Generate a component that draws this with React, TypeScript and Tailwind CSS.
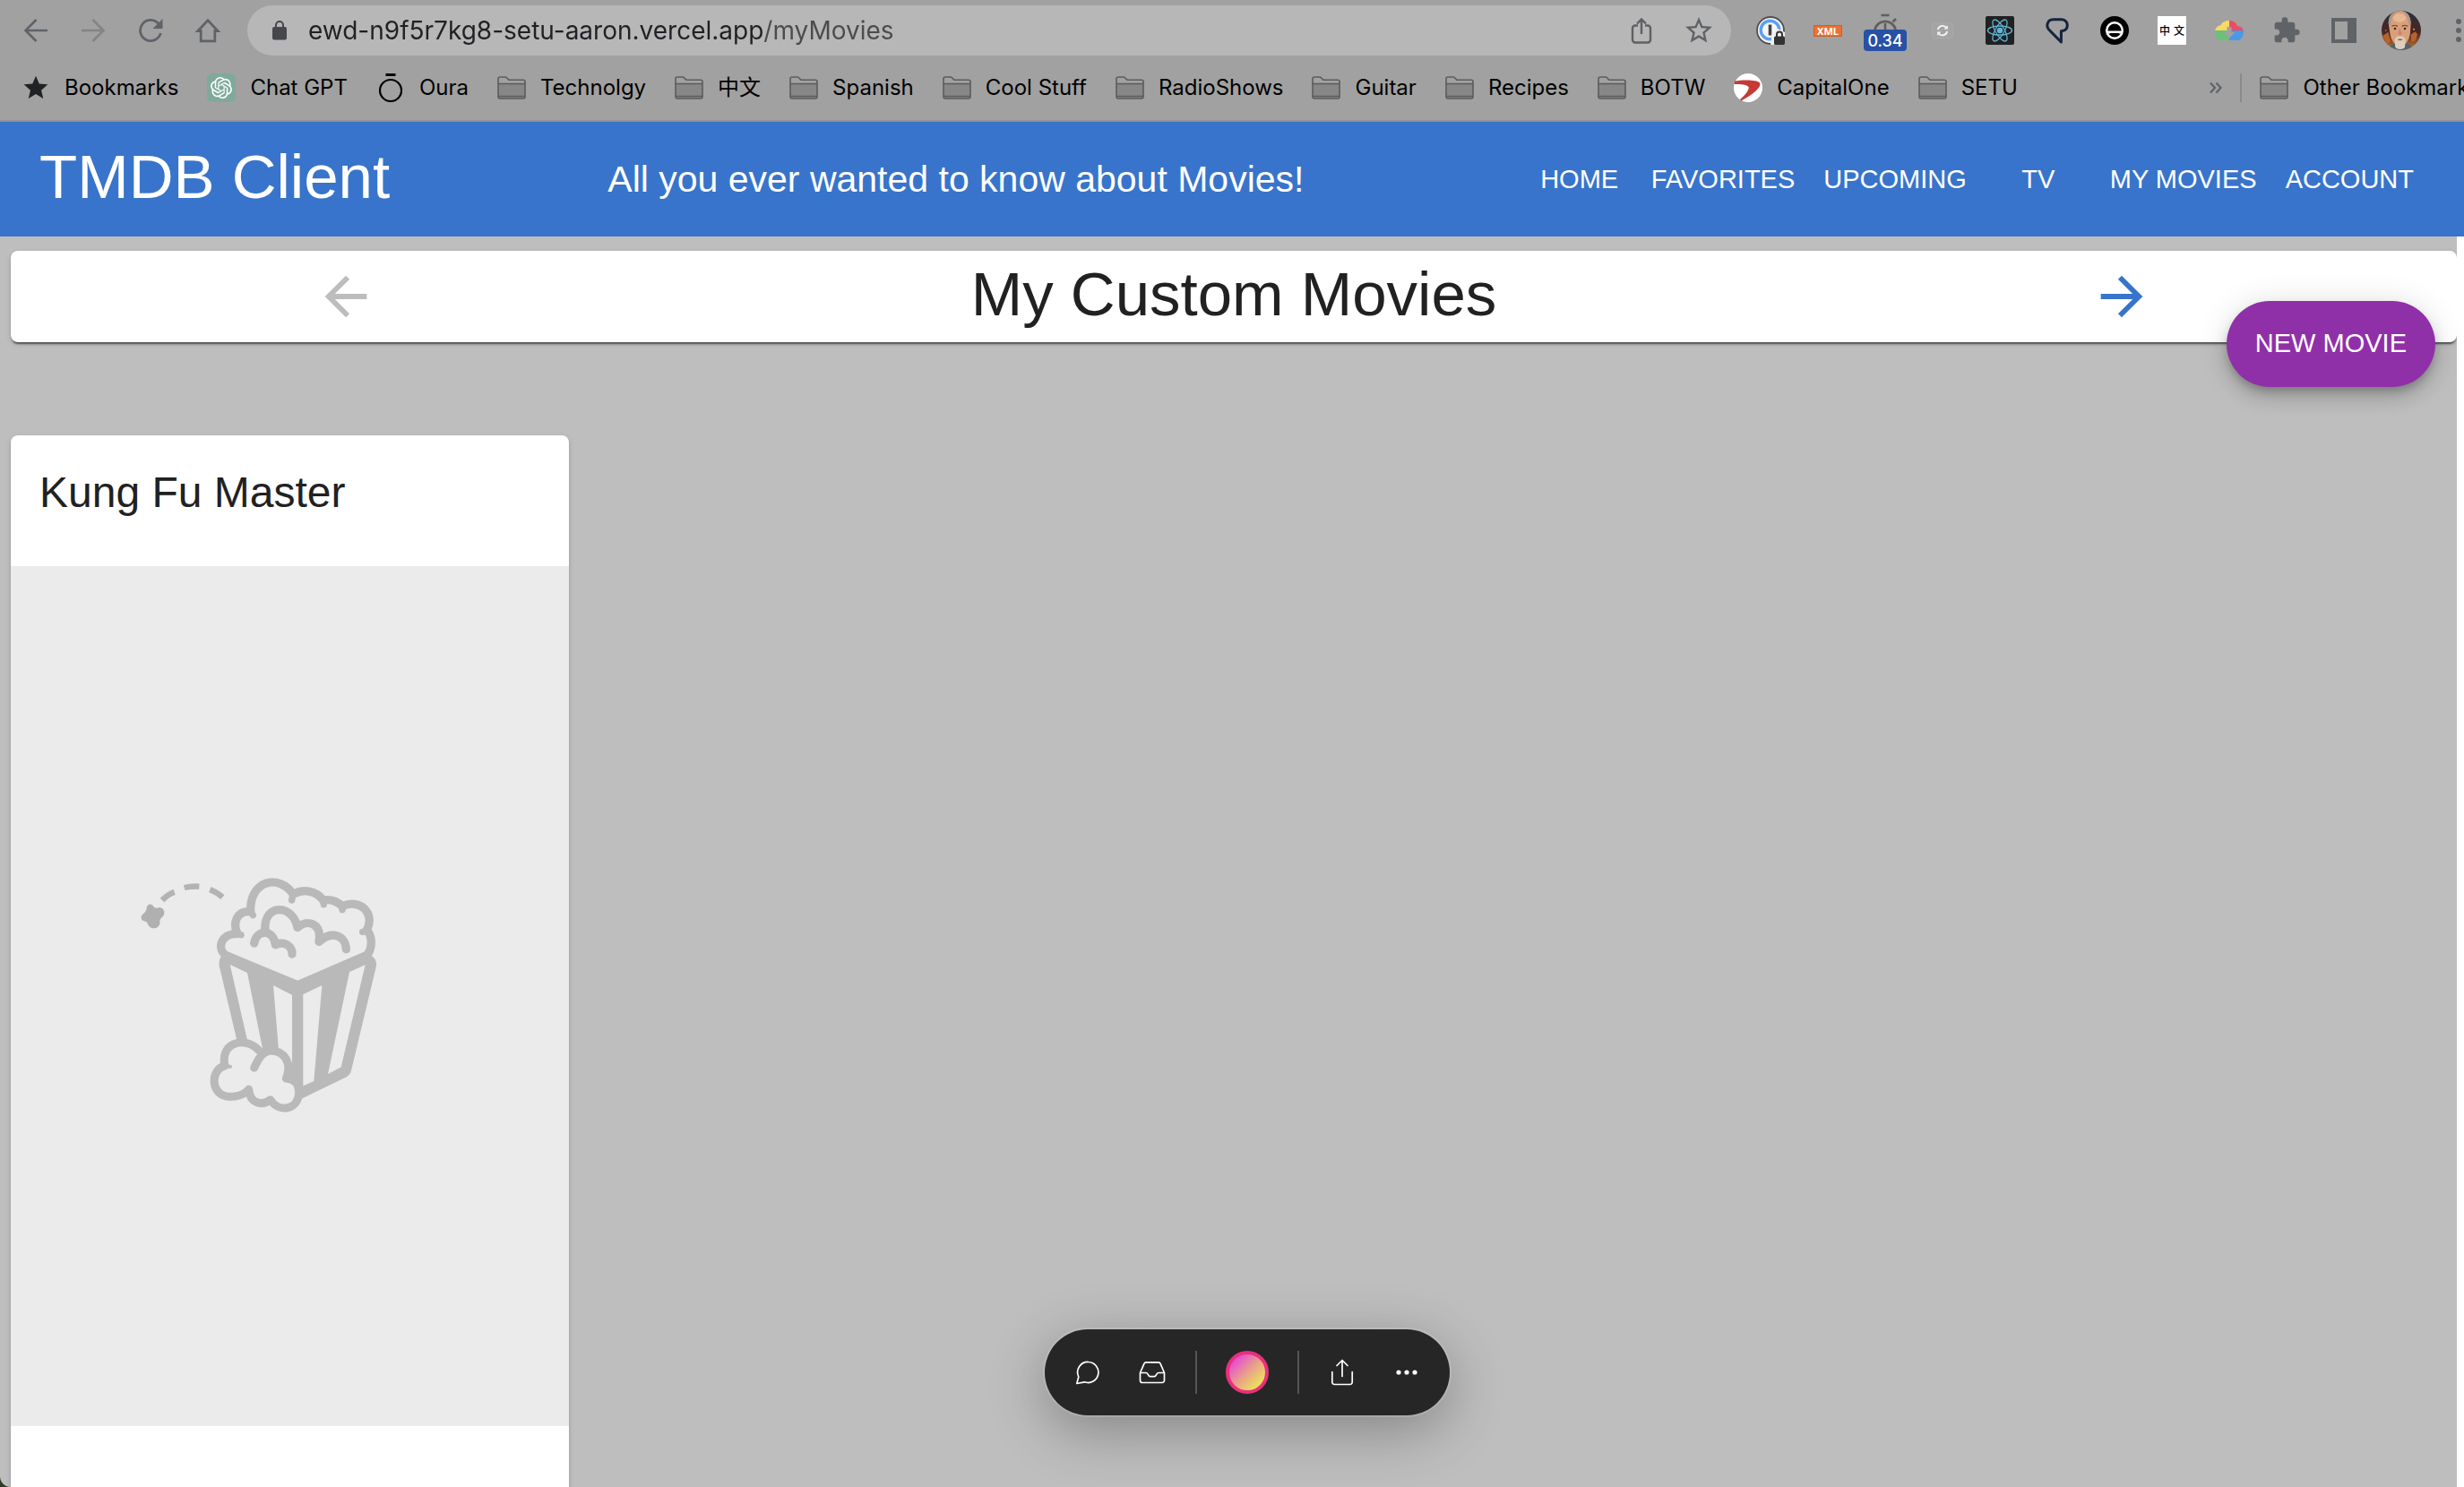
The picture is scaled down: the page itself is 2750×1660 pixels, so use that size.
import React from "react";
import { SiOpenai } from "react-icons/si";
import { MdExtension, MdStarBorder, MdStar } from "react-icons/md";

type IconProps = { className?: string };

/* ---------- browser icons ---------- */

const BackIcon = ({ className }: IconProps) => (
  <svg viewBox="0 0 28 28" className={className} fill="none" stroke="currentColor" strokeWidth="2.6">
    <path d="M27 14H3M14.5 2 2.5 14l12 12" />
  </svg>
);

const ForwardIcon = ({ className }: IconProps) => (
  <svg viewBox="0 0 28 28" className={className} fill="none" stroke="currentColor" strokeWidth="2.6">
    <path d="M1 14h24M13.500 2l12 12-12 12" />
  </svg>
);

const ReloadIcon = ({ className }: IconProps) => (
  <svg viewBox="0 0 28 28" className={className} fill="none">
    <path d="M23.500 7.200A11.600 11.600 0 1 0 25.300 17" stroke="currentColor" strokeWidth="2.800" />
    <path d="M27.500 1v11h-11z" fill="currentColor" />
  </svg>
);

const HomeIcon = ({ className }: IconProps) => (
  <svg viewBox="0 0 28 28" className={className} fill="none" stroke="currentColor" strokeWidth="2.8">
    <path d="M14 2.800 2.800 14.500h3.400v11.300h15.600V14.500h3.400z" />
  </svg>
);

const LockIcon = ({ className }: IconProps) => (
  <svg viewBox="0 0 16 22" className={className}>
    <rect x="0" y="7" width="16" height="14.500" rx="2" fill="#46474c" />
    <path d="M4 8V5a4 4 0 0 1 8 0v3" fill="none" stroke="#46474c" strokeWidth="2" />
  </svg>
);

const ShareIcon = ({ className }: IconProps) => (
  <svg viewBox="0 0 24 30" className={className} fill="none" stroke="#5f6064" strokeWidth="2.400">
    <path d="M8 9.500H5A3 3 0 0 0 2 12.500v13A3 3 0 0 0 5 28.500h14a3 3 0 0 0 3-3v-13a3 3 0 0 0-3-3h-3M12 19V2.500M7 7.500l5-5 5 5" />
  </svg>
);

const FolderIcon = () => (
  <svg viewBox="0 0 32 26" className="h-[26px] w-8" fill="none" stroke="#5c5c5c" strokeWidth="1.600">
    <path d="M1 8.500h30V23a2 2 0 0 1-2 2H3a2 2 0 0 1-2-2z" fill="#878787" />
    <path d="M1 8.500V3a2 2 0 0 1 2-2h6.500L13 4.200h16a2 2 0 0 1 2 2v2.300M1 22.500h30" />
  </svg>
);

const OuraIcon = () => (
  <svg viewBox="0 0 32 32" className="size-8" fill="none" stroke="#000">
    <circle cx="16" cy="19" r="12" strokeWidth="2.200" />
    <path d="M10.500 1.500h11" strokeWidth="3" />
  </svg>
);

const GptIcon = () => (
  <span className="flex size-8 items-center justify-center rounded-[6px] bg-[#7fa99b]">
    <SiOpenai className="size-6 text-white" />
  </span>
);

const CapitalIcon = () => (
  <svg viewBox="0 0 32 32" className="size-8">
    <circle cx="16" cy="16" r="16" fill="#fff" />
    <path d="M1 8.500C9 7 26 6.500 29 10.500c3 4.500-9 14-20.500 20L7 29c6-5 11-12 9.500-14C15 12.500 8 11.500.800 12z" fill="#c63b35" />
  </svg>
);

/* ---------- extension icons ---------- */

const PasswordIcon = () => (
  <svg viewBox="0 0 32 32" className="size-8">
    <circle cx="16" cy="16" r="15" fill="#f4f4f4" stroke="#4f4f4f" strokeWidth="1.800" />
    <circle cx="15.500" cy="15.500" r="10.300" fill="#f7f7f7" stroke="#5b9ff5" strokeWidth="3.400" />
    <rect x="13.700" y="9.500" width="3.600" height="12" fill="#444" />
    <path d="M18 18l6-4 8 4v14H16z" fill="#f0f0f0" />
    <rect x="20" y="22.500" width="12" height="9.500" rx="1.500" fill="#333" />
    <path d="M23 23v-2.500a3 3 0 0 1 6 0V23" fill="none" stroke="#333" strokeWidth="2" />
  </svg>
);

const StopwatchIcon = () => (
  <svg viewBox="0 0 28 20" className="h-5 w-7" fill="none" stroke="#5f5f5f">
    <path d="M2.500 18a11.800 11.800 0 0 1 23 0" strokeWidth="2.800" />
    <path d="M9.500 2h9M14 11v7" strokeWidth="2.600" />
    <path d="M22.500 9.500 26 6" strokeWidth="2.600" />
  </svg>
);

const SyncIcon = () => (
  <svg viewBox="0 0 24 18" className="h-[18px] w-6" fill="none">
    <rect x=".5" y=".5" width="23" height="17" rx="3" fill="#a4a4a4" stroke="#a9a9a9" />
    <path d="M6.800 8.200a5.300 5.300 0 0 1 9.500-2.200M17.200 10a5.300 5.300 0 0 1-9.500 2.200" stroke="#f5f5f5" strokeWidth="1.800" />
    <path d="M17.800 3.200v4.200h-4.200zM6.200 14.800v-4.200h4.200z" fill="#f5f5f5" />
  </svg>
);

const ReactIcon = () => (
  <svg viewBox="0 0 32 32" className="size-8" fill="none" stroke="#62b5d6" strokeWidth="1.300">
    <rect width="32" height="32" rx="2" fill="#212121" stroke="none" />
    <circle cx="16" cy="16" r="2.600" fill="#62b5d6" />
    <ellipse cx="16" cy="16" rx="13.500" ry="5" />
    <ellipse cx="16" cy="16" rx="13.500" ry="5" transform="rotate(60 16 16)" />
    <ellipse cx="16" cy="16" rx="13.500" ry="5" transform="rotate(120 16 16)" />
  </svg>
);

const PinIcon = () => (
  <svg viewBox="0 0 26 29" className="h-[29px] w-[26px]" fill="none" stroke="#16243c" strokeWidth="3" strokeLinejoin="round">
    <path d="M8.500 1.700h9A6.500 6.500 0 0 1 24.300 8c0 3-1.800 5.600-4.600 6.300l-2.300.5V27L3.500 12.800C.500 9.500 1.700 1.700 8.500 1.700z" />
  </svg>
);

const HelmetIcon = () => (
  <svg viewBox="0 0 32 32" className="size-8" fill="none">
    <circle cx="16" cy="16" r="16" fill="#000" />
    <circle cx="16" cy="16" r="8.800" stroke="#fff" strokeWidth="2.400" />
    <path d="M8 16.500h16v3H8z" fill="#fff" />
    <path d="M11 19.500h10" stroke="#000" strokeWidth="1.200" />
  </svg>
);

const CloudIcon = () => (
  <svg viewBox="0 0 32 22" className="h-[22px] w-8">
    <path d="M16 0v11H0C1 7.500 3.500 5.500 6.500 5 8 2 11.500 0 16 0z" fill="#f8d966" />
    <path d="M16 0c4.500 0 8 2.500 9 6 3.500.300 6 2.300 7 5H16z" fill="#ee4b63" />
    <path d="M0 11h16v11H7C2.500 22-.500 16 0 11z" fill="#6cc07a" />
    <path d="M16 11h16c.500 5.500-2.500 11-7 11h-9z" fill="#4c98e8" />
    <path d="M13.500 7h5v6h4L16 19.500 9.500 13h4z" fill="#a1a1a1" />
  </svg>
);

const PanelIcon = () => (
  <svg viewBox="0 0 28 28" className="size-7">
    <path fillRule="evenodd" d="M0 0h28v28H0zM4 4v20h14V4z" fill="#5f6368" />
  </svg>
);

const Avatar = () => (
  <svg viewBox="0 0 132 132" className="size-11">
    <defs>
      <clipPath id="face-clip">
        <circle cx="66" cy="66" r="66" />
      </clipPath>
      <linearGradient id="face-bg" x1="0" y1="0" x2="0" y2="1">
        <stop offset="0" stopColor="#27303f" />
        <stop offset=".55" stopColor="#4a2522" />
        <stop offset="1" stopColor="#c07b35" />
      </linearGradient>
    </defs>
    <g clipPath="url(#face-clip)">
      <rect width="132" height="132" fill="url(#face-bg)" />
      <path d="M4 85l18-14 8 30-10 14zM98 80l14-10 8 8-6 22-14 6z" fill="#b8622c" />
      <circle cx="108" cy="62" r="3" fill="#e8a24a" />
      <circle cx="14" cy="66" r="2.500" fill="#d78a3c" />
      <path d="M22 132c4-18 18-24 42-24s36 6 42 24z" fill="#56606b" />
      <path d="M23 40C25 14 42 0 62 0s34 14 36 40l-2 34c-4 26-16 42-34 48-18-6-30-22-34-48z" fill="#d99f7b" />
      <path d="M24 46C20 16 40-2 62 0c-18 4-30 20-32 48zM97 46C99 20 88 2 64 0c16 6 26 22 27 48z" fill="#a8998c" />
      <ellipse cx="60" cy="24" rx="22" ry="14" fill="#e8b896" />
      <path d="M34 52q9-6 20 0M68 52q10-6 20 0" stroke="#7b5038" strokeWidth="4" fill="none" />
      <circle cx="45" cy="60" r="4" fill="#3d2d28" />
      <circle cx="78" cy="60" r="4" fill="#3d2d28" />
      <path d="M60 58l-5 22h14z" fill="#c98463" />
      <path d="M44 98c4-12 10-14 18-12 8-2 14 0 18 12l-2 24c-6 9-26 9-32 0z" fill="#dccfbc" />
      <path d="M52 97q10-6 20 0-10 6-20 0z" fill="#a3604e" />
    </g>
  </svg>
);

const MoreIcon = () => (
  <svg viewBox="0 0 12 28" className="h-7 w-3" fill="#5f6368">
    <circle cx="6" cy="4" r="3" />
    <circle cx="6" cy="14" r="3" />
    <circle cx="6" cy="24" r="3" />
  </svg>
);

/* ---------- page icons ---------- */

const ArrowBack = () => (
  <svg viewBox="0 0 24 24" className="size-[70px]" fill="currentColor">
    <path d="M20 11H7.830l5.590-5.590L12 4l-8 8 8 8 1.410-1.410L7.830 13H20v-2z" />
  </svg>
);

const ArrowForward = () => (
  <svg viewBox="0 0 24 24" className="size-[70px]" fill="currentColor">
    <path d="m12 4-1.410 1.410L16.170 11H4v2h12.170l-5.580 5.590L12 20l8-8z" />
  </svg>
);

const PopcornArt = () => (
  <svg viewBox="-354 -951 1869 2880" className="block h-auto w-full bg-[#ebebeb]" fill="none" role="img" aria-label="No poster available">
    <g stroke="#b9b9b9" strokeWidth="28" strokeLinecap="round" strokeLinejoin="round">
      <path fill="#ebebeb" d="M370 354C335 335 345 280 405 280C388 245 402 202 449 206C445 100 545 78 592 148C625 128 668 135 692 168C715 164 738 170 756 188C815 160 868 212 838 268C860 290 855 335 838 352L606 452z" />
      <path d="M405 278q8 6 12 6M449 200q4 14 8 18M590 146q-1 14-3 22M690 168q4 6 4 14M756 188q-1 6 0 12M840 266q-6 6-16 8" strokeWidth="22" />
      <path d="M461 312C468 265 525 262 532 317C565 302 590 325 588 348" />
      <path d="M498 268C490 180 590 178 606 259C640 230 688 245 678 307C722 266 768 288 769 332" />
    </g>
    <path fill="#b9b9b9" d="M372 340L606 440L832 346L853 353Q872 364 870 388L786 738Q783 752 770 760L600 842L500 800L402 632L344 388Q341 362 356 352z" />
    <g fill="#ebebeb">
      <path d="M380 383L438 411L490 670L440 645z" />
      <path d="M525 453L588 485V730L543 670z" />
      <path d="M625 483L688 453L661 773L625 790z" />
      <path d="M780 408L833 384L752 727L708 750z" />
    </g>
    <path
      d="M478 672C430 620 345 645 363 722C315 735 315 812 365 824C395 830 428 820 443 801C445 845 485 860 515 836C545 880 605 872 611 815C612 780 592 766 568 765C590 712 560 670 515 672C485 676 473 705 461 729"
      fill="#ebebeb"
      stroke="#b9b9b9"
      strokeWidth="27"
      strokeLinecap="round"
      strokeLinejoin="round"
    />
    <path d="M363 715q6 10 18 10" stroke="#b9b9b9" strokeWidth="12" strokeLinecap="round" />
    <path d="M153 168Q172 148 194 140M227 126Q250 120 277 122M313 132Q338 142 355 158" stroke="#b3b3b3" strokeWidth="19" />
    <path
      fill="#b0b0b0"
      d="M101 192C103 179 120 177 125 190C132 197 136 193 143 192C155 192 163 204 159 215C157 224 148 226 145 234C147 250 142 260 127 262C113 263 107 254 103 243C97 236 84 240 83 228C82 217 91 214 96 207C100 202 101 198 101 192z"
    />
  </svg>
);

const ChatIcon = () => (
  <svg viewBox="0 0 28 28" className="size-7" fill="none" stroke="#fff" strokeWidth="1.700" strokeLinejoin="round">
    <path d="M15 2.500a11.500 11.500 0 1 1-4.500 22.300L1.800 26.500l2-7.500A11.500 11.500 0 0 1 15 2.500z" />
  </svg>
);

const InboxIcon = () => (
  <svg viewBox="0 0 30 26" className="h-[26px] w-[30px]" fill="none" stroke="#fff" strokeWidth="1.700" strokeLinejoin="round">
    <path d="M1.500 13.500V22a2.500 2.500 0 0 0 2.500 2.500h22a2.500 2.500 0 0 0 2.500-2.500v-8.500L24 3.200a2.200 2.200 0 0 0-2-1.400H8a2.200 2.200 0 0 0-2 1.400L1.500 13.500h6.700c2.500 0 2 4.200 4.500 4.200h4.600c2.500 0 2-4.200 4.500-4.200h6.700" />
  </svg>
);

const ExportIcon = () => (
  <svg viewBox="0 0 26 30" className="h-[30px] w-[26px]" fill="none" stroke="#fff" strokeWidth="1.700" strokeLinecap="round" strokeLinejoin="round">
    <path d="M1.800 14.500V26a2.500 2.500 0 0 0 2.500 2.500h17.400a2.500 2.500 0 0 0 2.500-2.500V14.500M13 19.500V1.500M7 7.500l6-6 6 6" />
  </svg>
);

const DotsIcon = () => (
  <svg viewBox="0 0 24 6" className="h-1.5 w-6" fill="#fff">
    <circle cx="3" cy="3" r="2.600" />
    <circle cx="12" cy="3" r="2.600" />
    <circle cx="21" cy="3" r="2.600" />
  </svg>
);

/* ---------- data ---------- */

const bookmarks: { label: string; icon: React.ReactNode }[] = [
  { label: "Bookmarks", icon: <MdStar className="size-8 text-[#202124]" /> },
  { label: "Chat GPT", icon: <GptIcon /> },
  { label: "Oura", icon: <OuraIcon /> },
  { label: "Technolgy", icon: <FolderIcon /> },
  { label: "中文", icon: <FolderIcon /> },
  { label: "Spanish", icon: <FolderIcon /> },
  { label: "Cool Stuff", icon: <FolderIcon /> },
  { label: "RadioShows", icon: <FolderIcon /> },
  { label: "Guitar", icon: <FolderIcon /> },
  { label: "Recipes", icon: <FolderIcon /> },
  { label: "BOTW", icon: <FolderIcon /> },
  { label: "CapitalOne", icon: <CapitalIcon /> },
  { label: "SETU", icon: <FolderIcon /> },
];

const extensions: { name: string; icon: React.ReactNode }[] = [
  { name: "Password manager", icon: <PasswordIcon /> },
  {
    name: "XML viewer",
    icon: (
      <span className="flex h-[13px] w-8 items-center justify-center border border-[#c9602a] bg-[#ee7130] font-['Noto_Sans'] text-[11px] font-bold leading-none text-white">
        XML
      </span>
    ),
  },
  {
    name: "Page load time",
    icon: (
      <span className="flex flex-col items-center pt-1">
        <StopwatchIcon />
        <span className="-mt-0.5 flex h-6 w-12 items-center justify-center rounded bg-[#2850a5] font-['Inter'] text-[18px] font-medium text-white">
          0.34
        </span>
      </span>
    ),
  },
  { name: "Sync", icon: <SyncIcon /> },
  { name: "React Developer Tools", icon: <ReactIcon /> },
  { name: "Pin", icon: <PinIcon /> },
  { name: "Helmet", icon: <HelmetIcon /> },
  {
    name: "Chinese dictionary",
    icon: (
      <span className="flex size-8 items-center justify-between bg-white px-0.5 font-['Noto_Sans_CJK_SC',sans-serif] text-[12px] font-medium leading-none text-black">
        <span>中</span>
        <span>文</span>
      </span>
    ),
  },
  { name: "Cloud download", icon: <CloudIcon /> },
  { name: "Extensions", icon: <MdExtension className="size-8 text-[#5f6368]" /> },
  { name: "Side panel", icon: <PanelIcon /> },
  { name: "Profile", icon: <Avatar /> },
];

const navItems = ["Home", "Favorites", "Upcoming", "TV", "My Movies", "Account"];

/* ---------- layout ---------- */

function ToolButton({ label, className = "", children }: { label: string; className?: string; children: React.ReactNode }) {
  return (
    <button aria-label={label} className={`flex h-14 w-16 shrink-0 items-center justify-center text-[#5f6368] ${className}`}>
      {children}
    </button>
  );
}

function BrowserChrome() {
  return (
    <div className="shrink-0 border-b-2 border-[#939393] bg-[#a1a1a1] font-['Inter','Noto_Sans_CJK_SC',sans-serif]">
      <div className="flex items-center pb-1 pl-2 pt-1.5">
        <ToolButton label="Back"><BackIcon className="size-7" /></ToolButton>
        <ToolButton label="Forward" className="text-[#838486]"><ForwardIcon className="size-7" /></ToolButton>
        <ToolButton label="Reload"><ReloadIcon className="size-7" /></ToolButton>
        <ToolButton label="Home"><HomeIcon className="size-7" /></ToolButton>
        <div className="mx-3 flex h-14 min-w-0 flex-1 items-center rounded-full bg-[#b7b7b7] pl-7">
          <LockIcon className="h-[22px] w-4 shrink-0" />
          <input
            aria-label="Address"
            defaultValue="ewd-n9f5r7kg8-setu-aaron.vercel.app/myMovies"
            className="ml-6 min-w-0 flex-1 bg-[linear-gradient(90deg,#202124_508px,#4a4b4d_508px)] bg-clip-text text-[28px] text-transparent outline-none"
          />
          <ToolButton label="Share"><ShareIcon className="h-[30px] w-6" /></ToolButton>
          <ToolButton label="Bookmark this page"><MdStarBorder className="size-9" /></ToolButton>
          <span className="w-1" />
        </div>
        {extensions.map((e) => (
          <ToolButton key={e.name} label={e.name}>{e.icon}</ToolButton>
        ))}
        <button aria-label="Menu" className="flex h-14 w-[38px] shrink-0 items-center justify-end"><MoreIcon /></button>
      </div>
      <nav aria-label="Bookmarks" className="flex h-[68px] items-center gap-8 overflow-hidden pl-6 pb-1 text-[24px] text-black">
        {bookmarks.map((b) => (
          <a key={b.label} href="#" className="flex shrink-0 items-center gap-4 whitespace-nowrap">
            {b.icon}
            {b.label}
          </a>
        ))}
        <div className="-mr-[18px] ml-auto flex shrink-0 items-center gap-5">
          <button aria-label="More bookmarks" className="text-[#5f6368]">
            <svg viewBox="0 0 14 14" className="size-3.5" fill="none" stroke="currentColor" strokeWidth="2.200">
              <path d="M1 1.500 6 7l-5 5.500M7.500 1.500l5 5.500-5 5.500" />
            </svg>
          </button>
          <span className="h-8 w-0.5 bg-[#8a8a8a]" />
          <a href="#" className="flex items-center gap-4 whitespace-nowrap">
            <FolderIcon />
            Other Bookmarks
          </a>
        </div>
      </nav>
    </div>
  );
}

function AppHeader() {
  return (
    <header className="flex h-32 shrink-0 items-center bg-[#3874cb] pl-11 pr-10 text-white">
      <h1 className="grow whitespace-nowrap pb-1 text-[69px] leading-[84px]">TMDB Client</h1>
      <p className="grow whitespace-nowrap text-[41px] leading-[64px]">All you ever wanted to know about Movies!</p>
      <nav aria-label="Main" className="flex">
        {navItems.map((n) => (
          <button key={n} className="min-w-32 whitespace-nowrap px-4 py-3 text-[29px] uppercase leading-[48px]">
            {n}
          </button>
        ))}
      </nav>
    </header>
  );
}

const elevation1 = "shadow-[0_4px_2px_-2px_rgba(0,0,0,0.4),0_2px_2px_rgba(0,0,0,0.2),0_2px_6px_rgba(0,0,0,0.12)]";

function Dock() {
  return (
    <div className="pointer-events-none absolute inset-x-0 bottom-20 flex justify-center pl-[34px]">
      <div className="pointer-events-auto flex h-24 items-center rounded-full bg-[#262626] px-3 shadow-[0_0_0_2px_rgba(255,255,255,0.15),0_16px_64px_rgba(0,0,0,0.3)]">
        <button aria-label="Comment" className="flex h-18 w-18 items-center justify-center"><ChatIcon /></button>
        <button aria-label="Inbox" className="flex h-18 w-18 items-center justify-center"><InboxIcon /></button>
        <span className="mx-3 h-12 w-0.5 bg-[#555]" />
        <button aria-label="Account" className="flex h-18 w-[88px] items-center justify-center">
          <span className="size-12 rounded-full border-4 border-[#ea2f7d] bg-[linear-gradient(135deg,#e63fe0_10%,#e9a08a_50%,#ecec55_90%)]" />
        </button>
        <span className="mx-3 h-12 w-0.5 bg-[#555]" />
        <button aria-label="Share" className="flex h-18 w-18 items-center justify-center"><ExportIcon /></button>
        <button aria-label="More" className="flex h-18 w-18 items-center justify-center"><DotsIcon /></button>
      </div>
    </div>
  );
}

export default function App() {
  return (
    <div className="h-screen bg-[#2f3b23]">
      <div className="relative flex h-full flex-col overflow-hidden rounded-bl-[12px] bg-[#bebebe] font-['Liberation_Sans',Arial,sans-serif] text-[#212121]">
        <BrowserChrome />
        <AppHeader />
        <main className="relative flex min-h-0 flex-1">
          <div className="flex min-w-0 flex-1 flex-col pl-3 pt-4">
            <section className={`flex shrink-0 items-center justify-around rounded-lg bg-white ${elevation1}`}>
              <button aria-label="Previous page" className="p-4 text-[#bdbdbd]" disabled><ArrowBack /></button>
              <h2 className="whitespace-nowrap pb-1 text-[69px] leading-[84px]">My Custom Movies</h2>
              <button aria-label="Next page" className="p-4 text-[#3874cb]"><ArrowForward /></button>
            </section>
            <article className={`mt-26 flex w-[623px] min-h-0 flex-1 flex-col overflow-hidden rounded-t-lg bg-white ${elevation1}`}>
              <h3 className="px-8 pb-[50px] pt-8 text-[48px] leading-[64px]">Kung Fu Master</h3>
              <PopcornArt />
            </article>
          </div>
          <div className="w-2 shrink-0 bg-white" />
          <button className="absolute right-8 top-18 h-24 rounded-full bg-[#8f30a8] px-8 text-[29px] text-white shadow-[0_6px_10px_-2px_rgba(0,0,0,0.2),0_12px_20px_rgba(0,0,0,0.14),0_2px_36px_rgba(0,0,0,0.12)]">
            NEW MOVIE
          </button>
        </main>
        <Dock />
      </div>
    </div>
  );
}
